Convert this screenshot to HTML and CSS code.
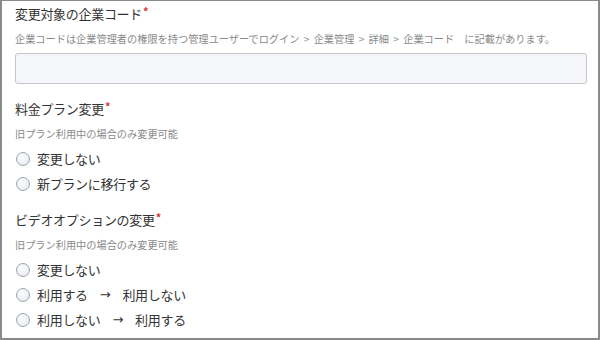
FILE: index.html
```html
<!DOCTYPE html>
<html lang="ja">
<head>
    <meta charset="UTF-8">
    <meta name="viewport" content="width=device-width, initial-scale=1.0">
    <title>変更申請フォーム</title>
    <link rel="stylesheet" href="styles.css">
</head>
<body>
    <div class="frame">
        <div class="field field-code">
            <div class="label">変更対象の企業コード<span class="req">*</span></div>
            <div class="hint">企業コードは企業管理者の権限を持つ管理ユーザーでログイン &gt; 企業管理 &gt; 詳細 &gt; 企業コード　に記載があります。</div>
            <input type="text" class="text-input">
        </div>

        <div class="field">
            <div class="label">料金プラン変更<span class="req">*</span></div>
            <div class="hint">旧プラン利用中の場合のみ変更可能</div>
            <label class="option"><input type="radio" name="plan">変更しない</label>
            <label class="option"><input type="radio" name="plan">新プランに移行する</label>
        </div>

        <div class="field">
            <div class="label">ビデオオプションの変更<span class="req">*</span></div>
            <div class="hint">旧プラン利用中の場合のみ変更可能</div>
            <label class="option"><input type="radio" name="video">変更しない</label>
            <label class="option"><input type="radio" name="video">利用する<span class="arrow">→</span>利用しない</label>
            <label class="option"><input type="radio" name="video">利用しない<span class="arrow">→</span>利用する</label>
        </div>
    </div>
</body>
</html>
```

FILE: styles.css
```css
body {
    margin: 0;
    font-family: "Noto Sans CJK JP", "Noto Sans", sans-serif;
    color: #333;
    background-color: white;
}
.frame {
    width: 600px;
    height: 340px;
    box-sizing: border-box;
    border: 2px solid #8a8a8a;
    border-top-width: 1px;
    padding: 3px 11px 0 13px;
    overflow: hidden;
}
.field {
    display: flex;
    flex-direction: column;
    align-items: flex-start;
    margin-bottom: 14px;
}
.field-code {
    margin-bottom: 15px;
}
.label {
    font-size: 13px;
    line-height: 20px;
    letter-spacing: -0.3px;
}
.req {
    color: #d9363e;
    font-size: 11px;
    font-weight: bold;
    vertical-align: top;
    line-height: 14px;
    margin-left: 1px;
}
.hint {
    margin-top: 7px;
    font-size: 10.2px;
    line-height: 16px;
    color: #8a8a8a;
}
.field-code .hint {
    word-spacing: 2px;
}
.text-input {
    margin-top: 6px;
    width: 100%;
    height: 31px;
    box-sizing: border-box;
    border: 1px solid #c4c6c9;
    border-radius: 3px;
    background-color: #f4f6f9;
}
.field .hint + .option {
    margin-top: 4px;
}
.option {
    display: flex;
    align-items: center;
    height: 25px;
    font-size: 13px;
    letter-spacing: -0.3px;
}
.option input {
    appearance: none;
    margin: 0 7px 0 1px;
    width: 14px;
    height: 14px;
    border: 1px solid #9fa4ab;
    border-radius: 50%;
    background: radial-gradient(circle at 40% 35%, #fbfcfd, #e3e8ef);
}
.arrow {
    margin: 0 12px;
    font-family: "DejaVu Sans", sans-serif;
    font-size: 13px;
}
```
